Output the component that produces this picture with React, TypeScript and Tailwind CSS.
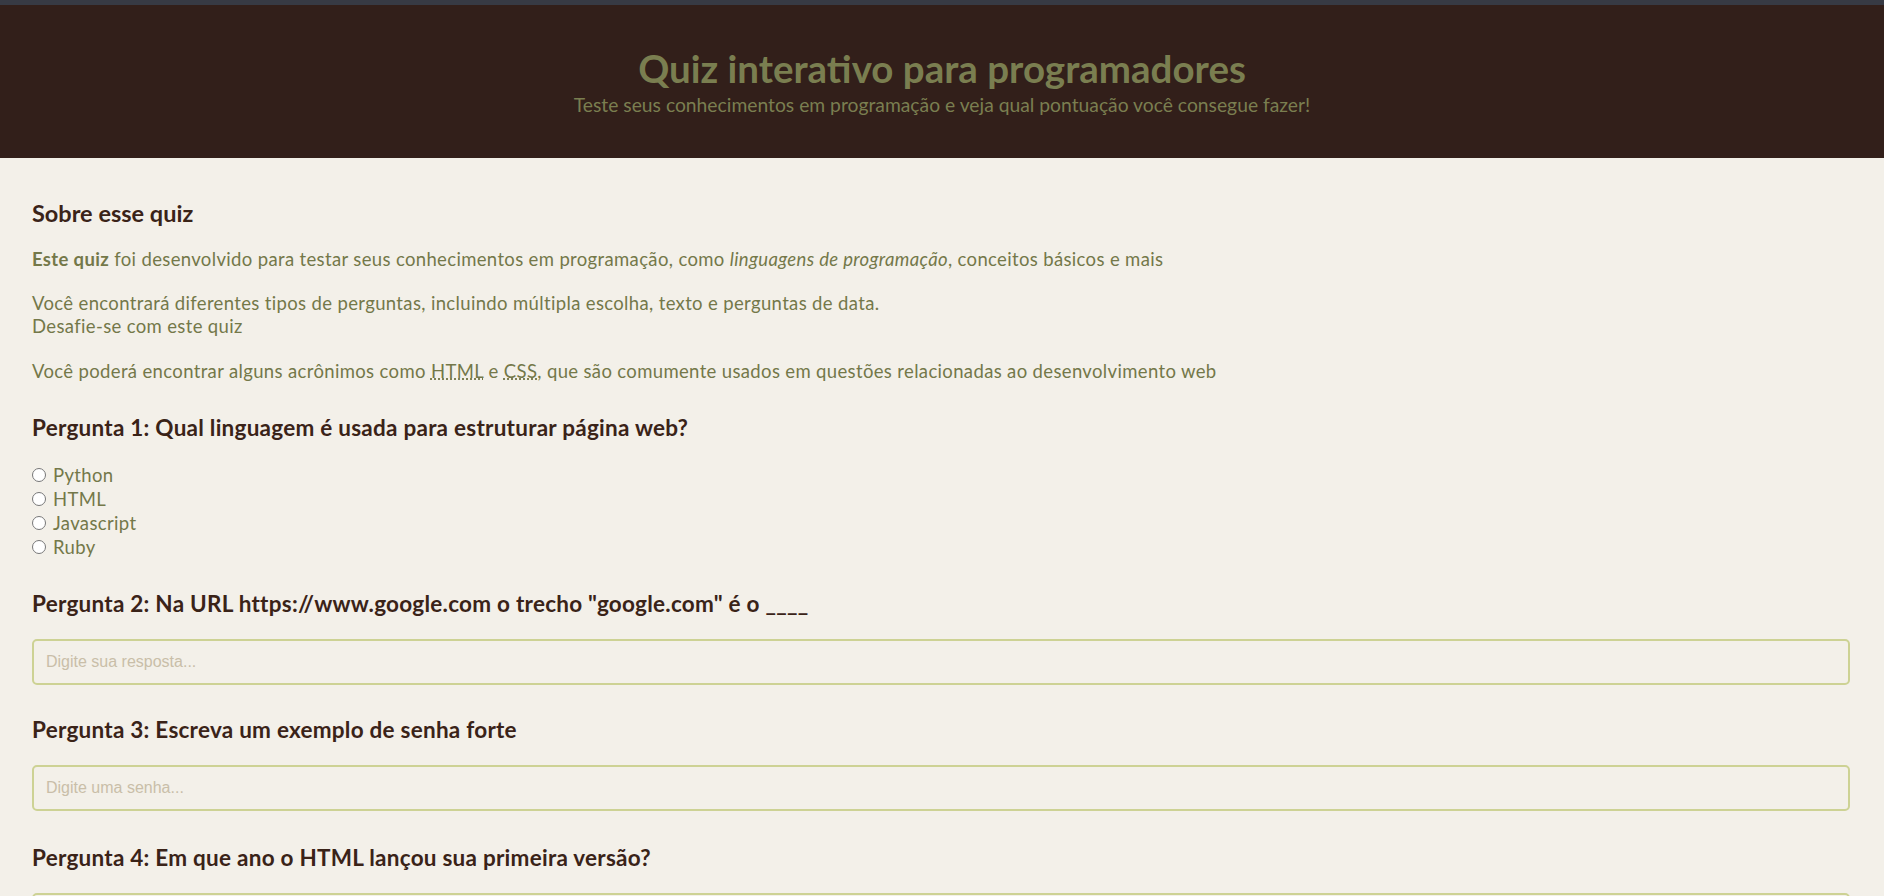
import * as React from "react";

const options = ["Python", "HTML", "Javascript", "Ruby"];

function Question({
  title,
  children,
  className = "mt-[31px]",
}: {
  title: string;
  children: React.ReactNode;
  className?: string;
}) {
  return (
    <section className={className}>
      <h3 className="text-[22.5px] leading-[27px] font-bold tracking-[0.25px] text-[#3a2318]">{title}</h3>
      <div className="mt-[22px]">{children}</div>
    </section>
  );
}

function TextInput({ placeholder, type = "text" }: { placeholder: string; type?: string }) {
  return (
    <input
      type={type}
      placeholder={placeholder}
      className="block h-[46px] w-full rounded-[5px] border-2 border-[#cdd294] bg-transparent px-[12px] font-['Liberation_Sans',Arial,sans-serif] text-[16px] tracking-normal text-[#5b5a40] outline-none placeholder:text-[#c9bea8]"
    />
  );
}

export default function App() {
  const [answer, setAnswer] = React.useState("");

  return (
    <div className="h-screen overflow-hidden bg-[#f3f0e9] font-['Lato','Open_Sans',sans-serif]">
      <div className="h-[5px] bg-[#373a44]" />
      <header className="flex h-[153px] flex-col items-center bg-[#321f1a] pt-[41px] text-[#7a7e50]">
        <h1 className="text-[38.5px] leading-[44px] font-bold">Quiz interativo para programadores</h1>
        <p className="mt-[2px] text-[19.3px] leading-[26px]">
          Teste seus conhecimentos em programação e veja qual pontuação você consegue fazer!
        </p>
      </header>

      <main className="pt-[41px] pr-[34px] pl-[32px] text-[18.5px] leading-[23px] tracking-[0.35px] text-[#747849]">
        <h2 className="text-[23.5px] leading-[28px] font-bold tracking-normal text-[#3a2318]">Sobre esse quiz</h2>
        <p className="mt-[21px]">
          <strong className="font-bold">Este quiz</strong> foi desenvolvido para testar seus conhecimentos em
          programação, como <em>linguagens de programação</em>, conceitos básicos e mais
        </p>
        <p className="mt-[21px]">
          Você encontrará diferentes tipos de perguntas, incluindo múltipla escolha, texto e perguntas de data.
          <br />
          Desafie-se com este quiz
        </p>
        <p className="mt-[22px]">
          Você poderá encontrar alguns acrônimos como{" "}
          <abbr title="HyperText Markup Language" className="underline decoration-dotted">
            HTML
          </abbr>{" "}
          e{" "}
          <abbr title="Cascading Style Sheets" className="underline decoration-dotted">
            CSS
          </abbr>
          , que são comumente usados em questões relacionadas ao desenvolvimento web
        </p>

        <Question title="Pergunta 1: Qual linguagem é usada para estruturar página web?">
          <div className="leading-[24px]">
            {options.map((opt) => (
              <label key={opt} className="block">
                <input
                  type="radio"
                  name="q1"
                  value={opt}
                  checked={answer === opt}
                  onChange={() => setAnswer(opt)}
                  className="mr-[7px] h-[14px] w-[14px]"
                />
                {opt}
              </label>
            ))}
          </div>
        </Question>

        <Question title='Pergunta 2: Na URL https://www.google.com o trecho "google.com" é o ____'>
          <TextInput placeholder="Digite sua resposta..." />
        </Question>

        <Question title="Pergunta 3: Escreva um exemplo de senha forte">
          <TextInput placeholder="Digite uma senha..." type="password" />
        </Question>

        <Question title="Pergunta 4: Em que ano o HTML lançou sua primeira versão?" className="mt-[33px]">
          <TextInput placeholder="Digite o ano..." type="number" />
        </Question>
      </main>
    </div>
  );
}
